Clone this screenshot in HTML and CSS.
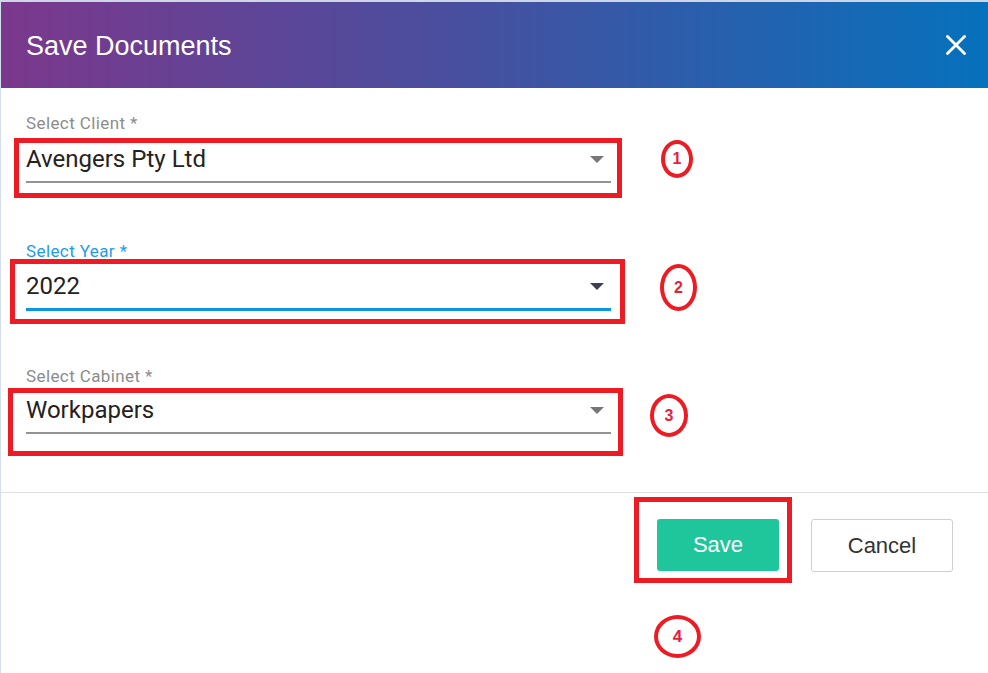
FILE: index.html
```html
<!DOCTYPE html>
<html>
<head>
<meta charset="utf-8">
<link rel="stylesheet" href="styles.css">
</head>
<body>
<div class="dialog">
  <header class="dlg-head">
    <h1 class="dlg-title">Save Documents</h1>
    <button class="close-btn" aria-label="Close">
      <svg width="20" height="20" viewBox="0 0 20 20"><path d="M1.5 1.5 L18.5 18.5 M18.5 1.5 L1.5 18.5" stroke="#fff" stroke-width="2.8" stroke-linecap="square" fill="none"/></svg>
    </button>
  </header>
  <div class="dlg-body">
    <div class="field f1">
      <label class="field-label">Select Client *</label>
      <div class="annot-row">
        <div class="redbox rb1">
          <div class="select">
            <span class="select-value">Avengers Pty Ltd</span>
            <span class="caret"></span>
          </div>
        </div>
        <span class="circle c1">1</span>
      </div>
    </div>
    <div class="field f2">
      <label class="field-label focused">Select Year *</label>
      <div class="annot-row">
        <div class="redbox rb2">
          <div class="select focused">
            <span class="select-value">2022</span>
            <span class="caret"></span>
          </div>
        </div>
        <span class="circle c2">2</span>
      </div>
    </div>
    <div class="field f3">
      <label class="field-label">Select Cabinet *</label>
      <div class="annot-row">
        <div class="redbox rb3">
          <div class="select">
            <span class="select-value">Workpapers</span>
            <span class="caret"></span>
          </div>
        </div>
        <span class="circle c3">3</span>
      </div>
    </div>
  </div>
  <footer class="dlg-foot">
    <div class="save-group">
      <div class="redbox rb4">
        <button class="btn btn-save">Save</button>
      </div>
      <span class="circle c4">4</span>
    </div>
    <button class="btn btn-cancel">Cancel</button>
  </footer>
</div>
</body>
</html>
```

FILE: styles.css
```css
* { box-sizing: border-box; }
html, body { margin: 0; padding: 0; background: #fff; }
body { width: 988px; height: 673px; overflow: hidden; }

.dialog {
  height: 673px;
  border-top: 2px solid #cdd5e6;
  border-left: 1px solid #d3dfee;
  background: #fff;
}

.dlg-head {
  height: 86px;
  display: flex;
  align-items: center;
  justify-content: space-between;
  padding: 0 22px 0 25px;
  background: linear-gradient(90deg, #7b388c 0%, #4a4e9e 45%, #0671bc 100%);
}
.dlg-title {
  margin: 0;
  font-family: "Liberation Sans", Arial, sans-serif;
  font-weight: normal;
  font-size: 27px;
  color: #fff;
  position: relative;
  top: 1px;
}
.close-btn {
  border: 0;
  background: none;
  padding: 0;
  width: 20px;
  height: 20px;
  display: flex;
  cursor: pointer;
}

.dlg-body {
  padding: 0 0 36px 0;
}
.field { display: flex; flex-direction: column; }
.f1 { padding-top: 27px; }
.f2 { padding-top: 45px; }
.f3 { padding-top: 44px; }

.field-label {
  margin-left: 25px;
  font-family: Roboto, sans-serif;
  font-size: 17px;
  letter-spacing: 0.4px;
  line-height: 16px;
  color: #8c8c8c;
}
.field-label.focused { color: #1e9be9; }
.f1 .field-label { margin-bottom: 7px; }
.f2 .field-label { margin-bottom: 0; }
.f3 .field-label { margin-bottom: 4px; }

.annot-row { display: flex; align-items: flex-start; }

.redbox { border: 5px solid #ed1c24; }
.rb1 { margin-left: 13px; width: 608px; padding: 2px 6px 10px 7px; }
.rb2 { margin-left: 9px; width: 615px; padding: 8px 9px 8px 11px; }
.rb3 { margin-left: 7px; width: 615px; padding: 3px 7px 17px 13px; }

.select {
  display: flex;
  align-items: center;
  justify-content: space-between;
  padding: 0 7px 8px 0;
  border-bottom: 2px solid #949494;
}
.select.focused { border-bottom: 3px solid #0b96e0; }
.select-value {
  font-family: Roboto, sans-serif;
  font-size: 24px;
  line-height: 28px;
  color: #222;
}
.caret {
  width: 0; height: 0;
  border-left: 7.5px solid transparent;
  border-right: 7.5px solid transparent;
  border-top: 7.5px solid #777;
}
.select.focused .caret { border-top-color: #3b4052; }

.circle {
  display: flex;
  align-items: center;
  justify-content: center;
  border: 4px solid #ed1c24;
  border-radius: 50%;
  font-family: "Liberation Sans", Arial, sans-serif;
  font-weight: bold;
  font-size: 16px;
  color: #e2233f;
  flex: none;
}
.c1 { width: 32px; height: 38px; margin: 2px 0 0 39px; }
.c2 { width: 37px; height: 47px; margin: 5px 0 0 35px; }
.c3 { width: 38px; height: 43px; margin: 6px 0 0 27px; }
.c4 { width: 47px; height: 43px; margin: 32px 0 0 20px; font-size: 17px; }

.dlg-foot {
  border-top: 1px solid #dedede;
  display: flex;
  justify-content: flex-end;
  align-items: flex-start;
  padding: 4px 35px 0 0;
}
.save-group { display: flex; flex-direction: column; align-items: flex-start; }
.rb4 { padding: 17px 8px 7px 18px; }

.btn {
  font-family: "Liberation Sans", Arial, sans-serif;
  font-size: 22px;
  border-radius: 3px;
  cursor: pointer;
  display: flex;
  align-items: center;
  justify-content: center;
  padding: 0;
}
.btn-save {
  width: 122px;
  height: 52px;
  border: 0;
  background: #1fc59b;
  color: #fff;
}
.btn-cancel {
  width: 142px;
  height: 53px;
  margin: 22px 0 0 19px;
  border: 1px solid #cfcfcf;
  background: #fff;
  color: #333;
}
```
